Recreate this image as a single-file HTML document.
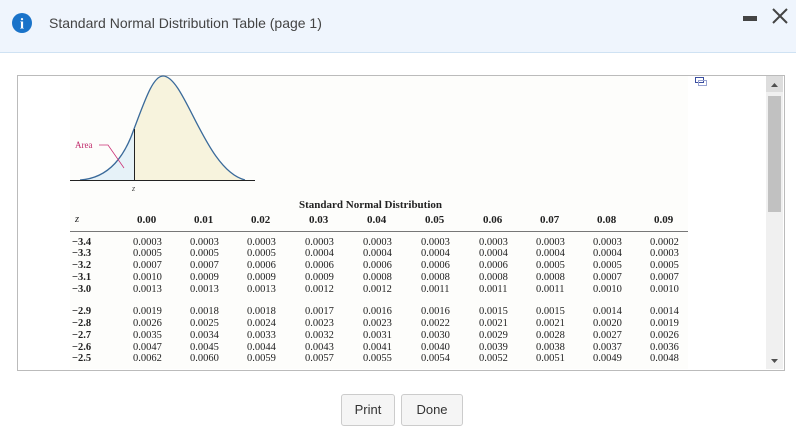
<!DOCTYPE html>
<html><head><style>
body{margin:0;width:796px;height:428px;background:#fff;position:relative;overflow:hidden;font-family:"Liberation Sans",sans-serif}
.hdr{position:absolute;left:0;top:0;width:796px;height:52px;background:#eff5fd;border-bottom:1px solid #cfe2f3}
.t{position:absolute;font-family:"Liberation Serif",serif;font-size:10.5px;color:#222;white-space:nowrap}
.b{font-weight:bold;font-size:11px}
.btn{position:absolute;top:394px;height:30px;border:1px solid #ccc;border-radius:3px;background:#f5f5f5;font-size:13px;color:#333;text-align:center;line-height:30px}
</style></head><body>
<div class="hdr"></div>
<svg style="position:absolute;left:12px;top:13px" width="20" height="20"><circle cx="10" cy="10" r="10" fill="#1a73c9"/><text x="10" y="15.5" text-anchor="middle" font-family="Liberation Serif" font-weight="bold" font-size="15" fill="#fff">i</text></svg>
<div style="position:absolute;left:49px;top:15px;font-size:14px;color:#444">Standard Normal Distribution Table (page 1)</div>
<div style="position:absolute;left:743px;top:16px;width:14px;height:5px;background:#444"></div>
<svg style="position:absolute;left:771px;top:7px" width="18" height="18"><path d="M2 2L16 16M16 2L2 16" stroke="#444" stroke-width="2"/></svg>
<div style="position:absolute;left:17px;top:75px;width:766px;height:294px;border:1px solid #bbb;background:#fff"></div>
<div style="position:absolute;left:70px;top:76px;width:618px;height:293px;background:#fdfdfb"></div>
<div style="position:absolute;left:766px;top:76px;width:17px;height:293px;background:#f0f0f0"></div>
<div style="position:absolute;left:766px;top:76px;width:17px;height:16px;background:#ddd"></div>
<div style="position:absolute;left:768px;top:96px;width:13px;height:116px;background:#c1c1c1"></div>
<svg style="position:absolute;left:766px;top:76px" width="17" height="293"><path d="M5 11L8.5 7L12 11Z M5 283L8.5 287L12 283Z" fill="#505050"/></svg>
<svg style="position:absolute;left:695px;top:77px" width="13" height="10"><rect x="0.5" y="0.5" width="8" height="5" fill="none" stroke="#3a4ea0"/><rect x="3.5" y="3.5" width="8" height="5" fill="none" stroke="#99a3d0"/></svg>
<svg style="position:absolute;left:70px;top:70px" width="200" height="125">
<path d="M10 110 C40 108 55 85 64 59 L64 110Z" fill="#e6f2f8"/>
<path d="M64 59 C75 30 83 6 93 6 C115 6 135 100 175 110 L64 110Z" fill="#f7f3dd"/>
<path d="M10 110 C40 108 55 85 64 59 C75 30 83 6 93 6 C115 6 135 100 175 110" fill="none" stroke="#3a6a9a" stroke-width="1.3"/>
<line x1="0" y1="110.5" x2="185" y2="110.5" stroke="#222"/>
<line x1="64.5" y1="59" x2="64.5" y2="110" stroke="#222"/>
<path d="M29 75 L38 75 L54 98" fill="none" stroke="#cc3377" stroke-width="0.8"/>
<text x="5" y="78" font-family="Liberation Serif" font-size="9" fill="#c02a6a">Area</text>
<text x="62" y="121" font-family="Liberation Serif" font-style="italic" font-size="8" fill="#444">z</text>
</svg>
<div class="t b" style="left:299px;top:199px">Standard Normal Distribution</div>
<div class="t" style="left:75px;top:214px;font-style:italic">z</div>
<div style="position:absolute;left:70px;top:231px;width:618px;height:1px;background:#777"></div>
<div id="tb"></div>
<script>
var cols=[148,205,262,320,378,436,494,551,608,665];
var h=["0.00","0.01","0.02","0.03","0.04","0.05","0.06","0.07","0.08","0.09"];
var rows=[["−3.4",243,"0.0003 0.0003 0.0003 0.0003 0.0003 0.0003 0.0003 0.0003 0.0003 0.0002"],
["−3.3",254,"0.0005 0.0005 0.0005 0.0004 0.0004 0.0004 0.0004 0.0004 0.0004 0.0003"],
["−3.2",266,"0.0007 0.0007 0.0006 0.0006 0.0006 0.0006 0.0006 0.0005 0.0005 0.0005"],
["−3.1",278,"0.0010 0.0009 0.0009 0.0009 0.0008 0.0008 0.0008 0.0008 0.0007 0.0007"],
["−3.0",290,"0.0013 0.0013 0.0013 0.0012 0.0012 0.0011 0.0011 0.0011 0.0010 0.0010"],
["−2.9",312,"0.0019 0.0018 0.0018 0.0017 0.0016 0.0016 0.0015 0.0015 0.0014 0.0014"],
["−2.8",324,"0.0026 0.0025 0.0024 0.0023 0.0023 0.0022 0.0021 0.0021 0.0020 0.0019"],
["−2.7",336,"0.0035 0.0034 0.0033 0.0032 0.0031 0.0030 0.0029 0.0028 0.0027 0.0026"],
["−2.6",348,"0.0047 0.0045 0.0044 0.0043 0.0041 0.0040 0.0039 0.0038 0.0037 0.0036"],
["−2.5",359,"0.0062 0.0060 0.0059 0.0057 0.0055 0.0054 0.0052 0.0051 0.0049 0.0048"]];
var s="";
h.forEach(function(v,i){s+='<div class="t b" style="left:'+(cols[i]-11)+'px;top:214px">'+v+'</div>';});
rows.forEach(function(r){s+='<div class="t b" style="left:72px;top:'+(r[1]-6)+'px;font-size:10.5px">'+r[0]+'</div>';
r[2].split(" ").forEach(function(v,i){s+='<div class="t" style="left:'+(cols[i]-15)+'px;top:'+(r[1]-6)+'px">'+v+'</div>';});});
document.getElementById("tb").innerHTML=s;
</script>
<div class="btn" style="left:341px;width:52px">Print</div>
<div class="btn" style="left:401px;width:60px">Done</div>
</body></html>
